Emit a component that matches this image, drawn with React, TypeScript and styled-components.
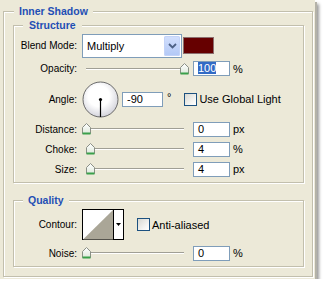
import React from 'react'
import styled, { createGlobalStyle } from 'styled-components'

const GlobalStyle = createGlobalStyle`
  html, body {
    margin: 0;
    padding: 0;
    background: #fff;
  }
  body {
    font-family: "Liberation Sans", Arial, sans-serif;
    font-size: 10px;
    color: #000;
  }
`

const Panel = styled.div`
  width: 310px;
  padding: 5px 2px 2px 3px;
  background: #ece9d8;
  box-shadow: 2px 2px 0 #b4b2a8, 4px 4px 3px rgba(0, 0, 0, 0.4);
`

const Group = styled.fieldset<{ $pad: string; $top?: number }>`
  margin: ${p => p.$top || 0}px 0 0 0;
  min-width: 0;
  padding: ${p => p.$pad};
  border: 1px solid #c2bfad;
  box-shadow: inset 1px 1px 0 #fff, 1px 1px 0 #fff;
`

const Legend = styled.legend<{ $offset: number; $pad: number }>`
  margin-left: ${p => p.$offset}px;
  padding: 0 ${p => p.$pad}px;
  background: #ece9d8;
  font-size: 10.5px;
  line-height: 12px;
  font-weight: bold;
  color: #1f4fb5;
`

const Row = styled.div<{ $h: number }>`
  display: flex;
  align-items: center;
  height: ${p => p.$h}px;
`

const Label = styled.span`
  width: 63px;
  margin-right: 5px;
  text-align: right;
  white-space: nowrap;
`

const Select = styled.div`
  box-sizing: border-box;
  display: flex;
  align-items: center;
  justify-content: space-between;
  width: 100px;
  height: 24px;
  padding: 1px 1px 1px 4px;
  background: #fff;
  border: 1px solid #7f9db9;
  font-size: 11px;
`

const DropButton = styled.div`
  display: flex;
  align-items: center;
  justify-content: center;
  width: 16px;
  height: 20px;
  border-radius: 2px;
  background: linear-gradient(#d3e0fd, #b2c8f6);
  box-shadow: inset 0 0 0 1px #c3d3f8;
`

const Swatch = styled.div`
  width: 29px;
  height: 15px;
  margin-left: 2px;
  background: #660000;
  box-shadow: 0 0 0 1px #8c6f6f;
`

const SliderBox = styled.div`
  position: relative;
  width: 108px;
  height: 14px;
`

const Track = styled.div`
  position: absolute;
  left: 4px;
  width: 98px;
  top: 6px;
  height: 1px;
  background: #a09f95;
  border-bottom: 1px solid #fff;
`

const Thumb = styled.svg`
  position: absolute;
  top: 1px;
`

const Field = styled.div<{ $w: number; $ml: number }>`
  box-sizing: border-box;
  width: ${p => p.$w}px;
  height: 15px;
  margin-left: ${p => p.$ml}px;
  padding: 0 4px;
  background: #fff;
  border: 1px solid #7f9db9;
  font-size: 11px;
  line-height: 13px;
`

const Selected = styled.span`
  background: #316ac5;
  color: #fff;
`

const Unit = styled.span<{ $raise?: boolean }>`
  margin-left: ${p => (p.$raise ? 4 : 3)}px;
  font-size: 11px;
  align-self: ${p => (p.$raise ? 'flex-start' : 'center')};
  margin-top: ${p => (p.$raise ? 12 : 0)}px;
`

const Check = styled.span<{ $ml: number }>`
  box-sizing: border-box;
  width: 13px;
  height: 13px;
  margin-left: ${p => p.$ml}px;
  border: 1px solid #1c5180;
  background: linear-gradient(135deg, #d8d8d2, #f6f6f4 70%, #fff);
`

const CheckText = styled.span`
  margin-left: 2px;
  font-size: 11px;
  white-space: nowrap;
`

const Slider = ({ value, max = 100 }: { value: number; max?: number }) => (
  <SliderBox>
    <Track />
    <Thumb width="9" height="12" viewBox="0 0 9 12" style={{ left: Math.round((value / max) * 98) }}>
      <defs>
        <linearGradient id="thumbFill" x1="0" y1="0" x2="0" y2="1">
          <stop offset="0" stopColor="#ffffff" />
          <stop offset="1" stopColor="#dfe9dc" />
        </linearGradient>
      </defs>
      <path d="M0.5 4.5 L4.5 0.5 L8.5 4.5 L8.5 10.5 L0.5 10.5 Z" fill="url(#thumbFill)" stroke="#8a8f86" />
      <rect x="0.5" y="9.5" width="8" height="2" fill="#3aa04a" />
    </Thumb>
  </SliderBox>
)

const Dial = () => (
  <svg width="37" height="37" viewBox="0 0 37 37">
    <defs>
      <radialGradient id="dialFill" cx="0.45" cy="0.4" r="0.6">
        <stop offset="0.5" stopColor="#ffffff" />
        <stop offset="1" stopColor="#d4d4dc" />
      </radialGradient>
    </defs>
    <circle cx="18.5" cy="18.5" r="17.5" fill="url(#dialFill)" stroke="#6a6a6a" />
    <line x1="18.5" y1="18.5" x2="18.5" y2="36" stroke="#000" strokeWidth="1.2" />
    <circle cx="18.5" cy="18.5" r="1.6" fill="#000" />
  </svg>
)

const Contour = () => (
  <svg width="42" height="31" viewBox="0 0 42 31">
    <rect x="0.5" y="0.5" width="41" height="30" fill="#fff" stroke="#000" />
    <polygon points="1,30.5 31,1 31,30.5" fill="#aaa697" />
    <line x1="31.5" y1="1" x2="31.5" y2="30" stroke="#000" />
    <polygon points="34,14 39,14 36.5,17" fill="#000" />
  </svg>
)

const Chevron = () => (
  <svg width="9" height="6" viewBox="0 0 9 6">
    <path d="M1 1 L4.5 4.5 L8 1" fill="none" stroke="#4d6185" strokeWidth="1.8" />
  </svg>
)

export default function App() {
  return (
    <>
      <GlobalStyle />
      <Panel>
        <Group $pad="2px 8px 9px 9px">
          <Legend $offset={1} $pad={5}>Inner Shadow</Legend>
          <Group $pad="2px 0 3px 0">
            <Legend $offset={9} $pad={6}>Structure</Legend>
            <Row $h={25}>
              <Label>Blend Mode:</Label>
              <Select>
                <span>Multiply</span>
                <DropButton>
                  <Chevron />
                </DropButton>
              </Select>
              <Swatch />
            </Row>
            <Row $h={21}>
              <Label>Opacity:</Label>
              <Slider value={100} />
              <Field $w={37} $ml={3}>
                <Selected>100</Selected>
              </Field>
              <Unit>%</Unit>
            </Row>
            <Row $h={40}>
              <Label>Angle:</Label>
              <Dial />
              <Field $w={41} $ml={3}>-90</Field>
              <Unit $raise>°</Unit>
              <Check $ml={13} />
              <CheckText>Use Global Light</CheckText>
            </Row>
            <Row $h={20}>
              <Label>Distance:</Label>
              <Slider value={0} />
              <Field $w={37} $ml={3}>0</Field>
              <Unit>px</Unit>
            </Row>
            <Row $h={20}>
              <Label>Choke:</Label>
              <Slider value={4} />
              <Field $w={37} $ml={3}>4</Field>
              <Unit>%</Unit>
            </Row>
            <Row $h={20}>
              <Label>Size:</Label>
              <Slider value={4} />
              <Field $w={37} $ml={3}>4</Field>
              <Unit>px</Unit>
            </Row>
          </Group>
          <Group $pad="1px 0 2px 0" $top={11}>
            <Legend $offset={9} $pad={5}>Quality</Legend>
            <Row $h={35}>
              <Label>Contour:</Label>
              <Contour />
              <Check $ml={13} />
              <CheckText>Anti-aliased</CheckText>
            </Row>
            <Row $h={22}>
              <Label>Noise:</Label>
              <Slider value={0} />
              <Field $w={37} $ml={3}>0</Field>
              <Unit>%</Unit>
            </Row>
          </Group>
        </Group>
      </Panel>
    </>
  )
}
